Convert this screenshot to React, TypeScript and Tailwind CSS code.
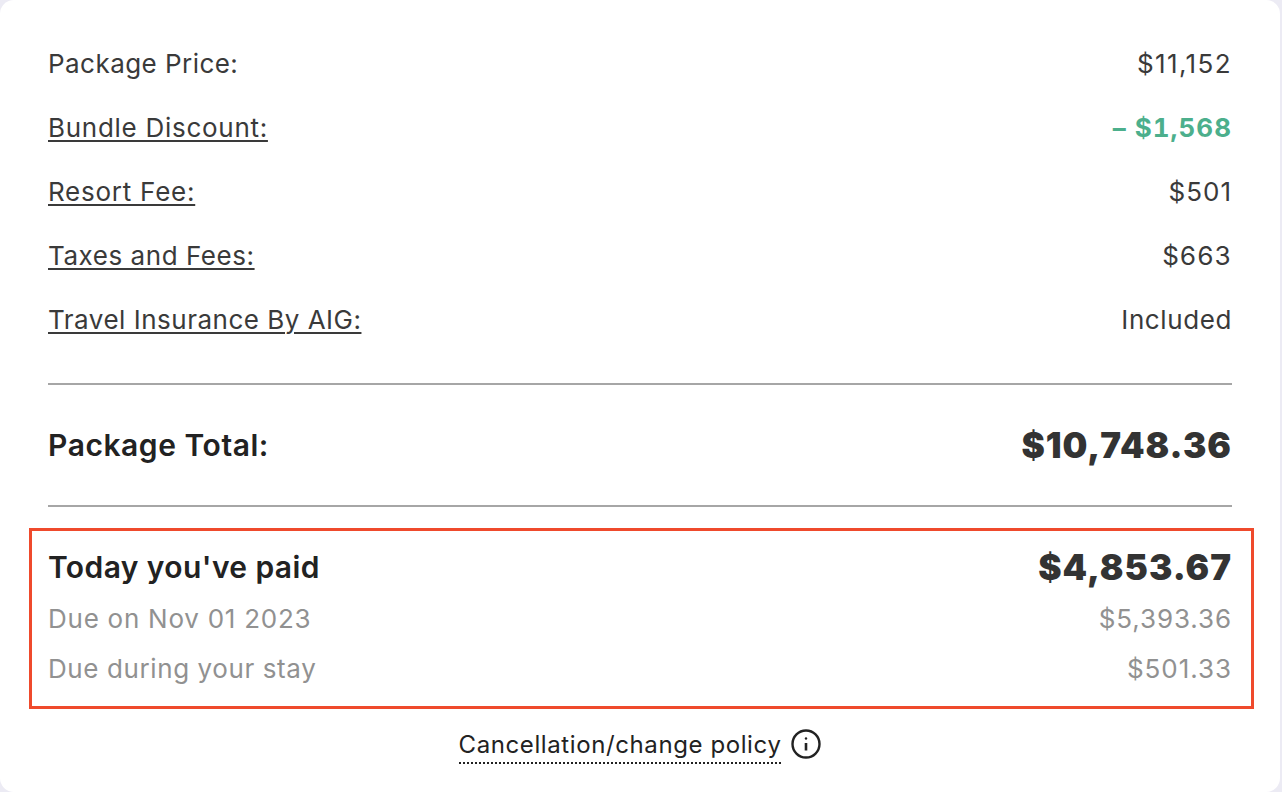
import React from 'react';

const rows = [
  { label: 'Package Price:', labelClass: 'tracking-[0.45px]', value: '$11,152', valueClass: 'tracking-[1.4px]' },
  { label: 'Bundle Discount:', labelClass: 'tracking-[0.72px] underline underline-offset-[3px] decoration-[2px]', value: '– $1,568', valueClass: 'font-bold tabular-nums tracking-[1px] text-[#4caf8c]' },
  { label: 'Resort Fee:', labelClass: 'tracking-[0.75px] underline underline-offset-[3px] decoration-[2px]', value: '$501', valueClass: 'tracking-[1px]' },
  { label: 'Taxes and Fees:', labelClass: 'tracking-[0.55px] underline underline-offset-[3px] decoration-[2px]', value: '$663', valueClass: 'tabular-nums tracking-[0.6px]' },
  { label: 'Travel Insurance By AIG:', labelClass: 'tracking-[0.5px] underline underline-offset-[3px] decoration-[2px]', value: 'Included', valueClass: 'tracking-[0.6px]' },
];

export default function App() {
  return (
    <div className="h-[792px] w-[1282px] overflow-hidden bg-[#ecebf4] font-['Inter',sans-serif]">
      <div className="h-[792px] w-[1280px] rounded-[14px] bg-white px-[48px] pt-[32px]">
        <div className="flex w-[1184px] flex-col">
          {rows.map((r) => (
            <div key={r.label} className="flex h-[64px] items-start justify-between text-[26px] leading-[64px] text-[#3a3a3a]">
              <span className={r.labelClass}>{r.label}</span>
              <span className={r.valueClass}>{r.value}</span>
            </div>
          ))}
        </div>
        <div className="w-[1184px] border-t-2 border-[#a6a6a6] mt-[31px]" />
        <div className="flex h-[120px] w-[1184px] items-center justify-between">
          <span className="text-[30px] font-semibold tracking-[0.55px] text-[#222222]">Package Total:</span>
          <span className="text-[35px] font-black tracking-[1px] text-[#333333]">$10,748.36</span>
        </div>
        <div className="w-[1184px] border-t-2 border-[#a6a6a6]" />
        <div className="-mx-[19px] mt-[21px] h-[181px] w-[1225px] border-[3px] border-[#ef4a2c] pl-[16px] pr-[19px] pt-[14px]">
          <div className="flex h-[45px] items-center justify-between">
            <span className="text-[30px] font-semibold tracking-[0.4px] text-[#222222]">Today you've paid</span>
            <span className="text-[35px] font-black tracking-[1px] text-[#333333]">$4,853.67</span>
          </div>
          <div className="mt-[3px] flex h-[50px] items-center justify-between text-[26px] text-[#919191]">
            <span className="tracking-[0.75px]">Due on Nov 01 2023</span>
            <span className="tracking-[0.9px]">$5,393.36</span>
          </div>
          <div className="flex h-[50px] items-center justify-between text-[26px] text-[#919191]">
            <span className="tracking-[0.6px]">Due during your stay</span>
            <span className="tracking-[0.95px]">$501.33</span>
          </div>
        </div>
        <div className="mt-[19px] flex w-[1184px] items-center justify-center gap-[10px]">
          <span className="border-b-2 border-dotted border-[#222222] text-[24px] leading-[34px] tracking-[0.6px] text-[#222222]">Cancellation/change policy</span>
          <svg width="30" height="30" viewBox="0 0 30 30" fill="none" stroke="#222222" strokeWidth="2.4" className="-mt-[4px]">
            <circle cx="15" cy="15" r="13.5" />
            <path d="M15 14v7.5" strokeWidth="2.6" />
            <circle cx="15" cy="9.5" r="1.2" fill="#222222" stroke="none" />
          </svg>
        </div>
      </div>
    </div>
  );
}
